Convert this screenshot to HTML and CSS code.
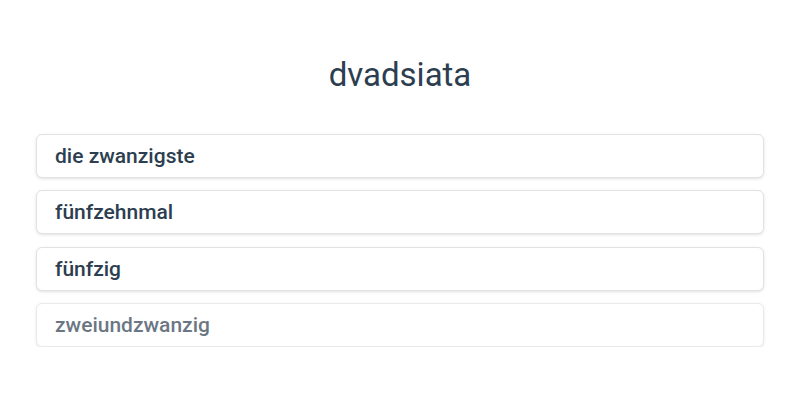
FILE: index.html
```html
<!DOCTYPE html>
<html>
<head>
<meta charset="utf-8">
<link rel="stylesheet" href="styles.css">
</head>
<body>
<main class="quiz">
  <h1 class="word">dvadsiata</h1>
  <div class="options">
    <button class="option">die zwanzigste</button>
    <button class="option">fünfzehnmal</button>
    <button class="option">fünfzig</button>
    <button class="option option-faded">zweiundzwanzig</button>
  </div>
</main>
</body>
</html>
```
FILE: styles.css
```css
html, body {
  margin: 0;
  padding: 0;
  background: #ffffff;
}
body {
  font-family: Roboto, "Liberation Sans", sans-serif;
  color: #2c3e50;
}
.quiz {
  padding: 54px 36px 0;
}
.word {
  margin: 0;
  text-align: center;
  font-size: 33px;
  font-weight: 400;
  line-height: 42px;
  color: #2c3e50;
}
.options {
  margin-top: 37.5px;
  display: flex;
  flex-direction: column;
  gap: 12.5px;
}
.option {
  display: block;
  width: 100%;
  height: 44px;
  box-sizing: border-box;
  text-align: left;
  padding: 0 18px;
  font-family: inherit;
  font-size: 21px;
  font-weight: 500;
  color: #2c3e50;
  background: #ffffff;
  border: 1px solid #e2e2e2;
  border-radius: 6px;
  box-shadow: 0 1px 3px rgba(0,0,0,0.12);
}
.option-faded {
  opacity: 0.7;
}
```
